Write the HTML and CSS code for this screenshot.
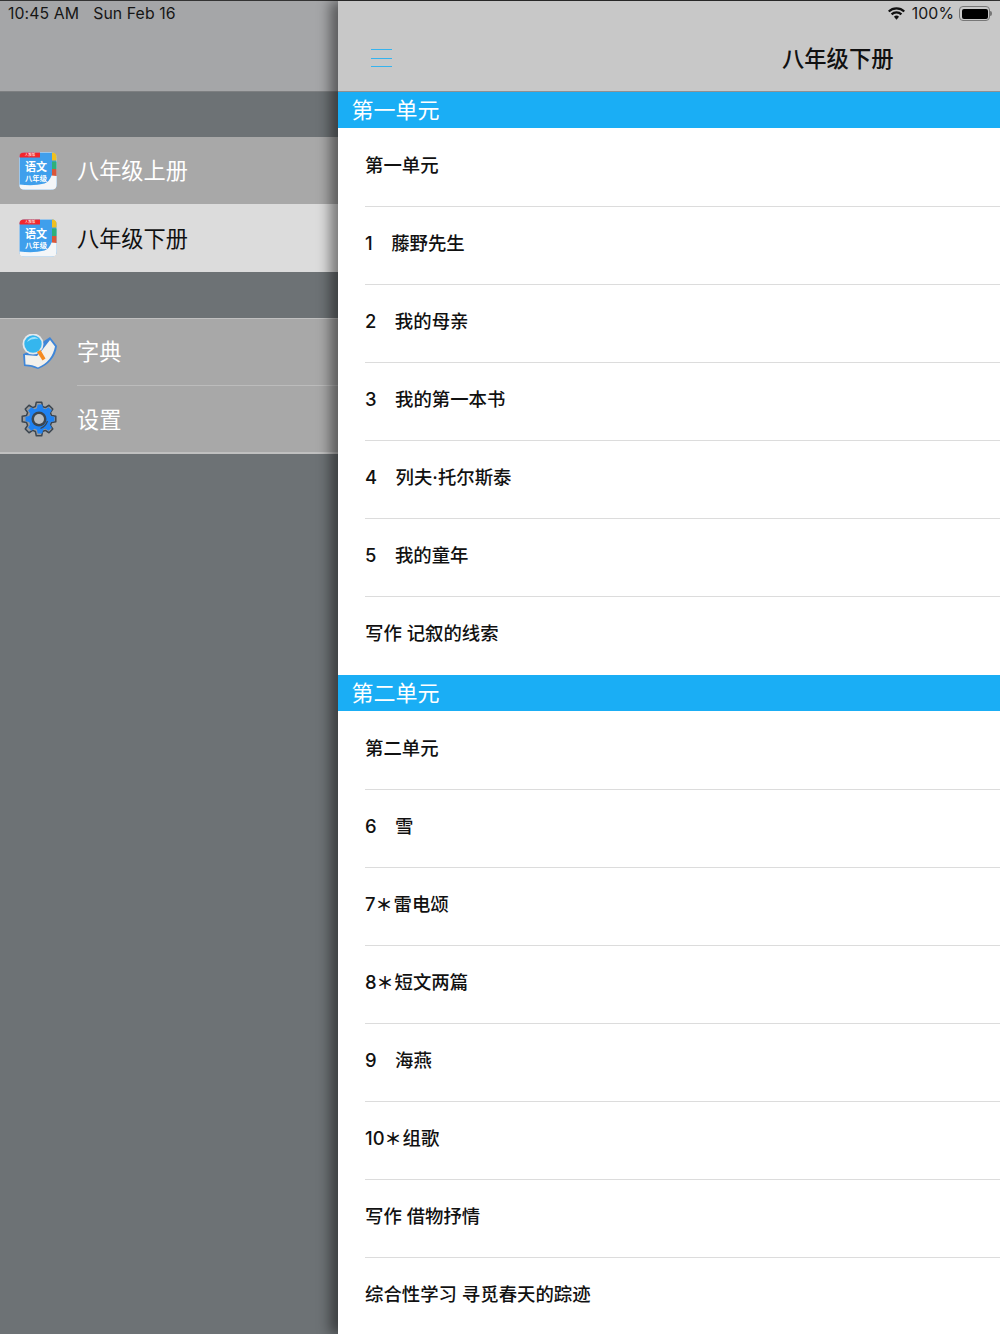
FILE: index.html
```html
<!DOCTYPE html>
<html lang="zh-CN">
<head>
<meta charset="utf-8">
<title>八年级下册</title>
<link rel="stylesheet" href="styles.css">
</head>
<body>
<div class="app">
  <aside class="side">
    <header class="side-head">
      <span class="status-text">10:45 AM</span>
      <span class="status-text">Sun Feb 16</span>
    </header>
    <nav class="group group-books">
      <a class="item first">
        <svg class="icon" viewBox="0 0 38 38">
          <rect x="0.500" y="0.500" width="37" height="37" rx="5" fill="#3f9fec" stroke="#9cc6ea"/>
          <path d="M5 0.500h16v5H1q-0.500 0-0.500-1 0-4 4.500-4z" fill="#f2262c"/>
          <path d="M33 0.500q4.500 0 4.500 4.500v3.500H33z" fill="#f0c020"/>
          <rect x="33" y="9.500" width="4.500" height="7.500" fill="#2eb07a"/>
          <rect x="33" y="17" width="4.500" height="7" fill="#d9573a"/>
          <path d="M0.500 32.500q14 2 25-1 5-2 7-8l5 0.500v9q0 4.500-4.500 4.500H5q-4.500 0-4.500-4.500z" fill="#f4f6f8"/>
          <text class="ico-tab" x="11" y="4.300">人教版</text>
          <text class="ico-big" x="17" y="19">语文</text>
          <text class="ico-small" x="17" y="28.500">八年级</text>
        </svg>
        <span class="label">八年级上册</span>
      </a>
      <a class="item active">
        <svg class="icon" viewBox="0 0 38 38">
          <rect x="0.500" y="0.500" width="37" height="37" rx="5" fill="#3f9fec" stroke="#9cc6ea"/>
          <path d="M5 0.500h16v5H1q-0.500 0-0.500-1 0-4 4.500-4z" fill="#f2262c"/>
          <path d="M33 0.500q4.500 0 4.500 4.500v3.500H33z" fill="#f0c020"/>
          <rect x="33" y="9.500" width="4.500" height="7.500" fill="#2eb07a"/>
          <rect x="33" y="17" width="4.500" height="7" fill="#d9573a"/>
          <path d="M0.500 32.500q14 2 25-1 5-2 7-8l5 0.500v9q0 4.500-4.500 4.500H5q-4.500 0-4.500-4.500z" fill="#f4f6f8"/>
          <text class="ico-tab" x="11" y="4.300">人教版</text>
          <text class="ico-big" x="17" y="19">语文</text>
          <text class="ico-small" x="17" y="28.500">八年级</text>
        </svg>
        <span class="label">八年级下册</span>
      </a>
    </nav>
    <nav class="group group-tools">
      <a class="item tool">
        <svg class="icon tool-icon" viewBox="0 0 36 36">
          <path d="M2 20 3 32q7 0 14 3 8-3 13-9 5-6 6-14l-7-9-6 4-7 8z" fill="#3f86d8"/>
          <path d="M4 21 4.500 30.500q7 0 12.500 3 7-3 11.500-8.500 4-5 5.500-12.500L29 6l-7 9-6 7z" fill="#f3f1ec"/>
          <circle cx="12" cy="10" r="10.500" fill="#e4e8ec"/>
          <circle cx="12" cy="10" r="8.700" fill="#35b6ee"/>
          <path d="M6 8q2-5 8-5 3 1 3 2-6-1-11 3z" fill="#9fe0f8"/>
          <path d="M16 18 19.500 16l5 8.500-3 2z" fill="#f58a1f"/>
        </svg>
        <span class="label">字典</span>
      </a>
      <a class="item tool">
        <svg class="icon tool-icon" viewBox="0 0 36 36">
          <polygon class="gear-out" points="15.300,1.200 20.700,1.200 21.600,5.500 24.300,6.600 28,4.250 31.750,8 29.400,11.700 30.500,14.400 34.800,15.300 34.800,20.700 30.500,21.600 29.400,24.300 31.750,28 28,31.750 24.300,29.400 21.600,30.500 20.700,34.800 15.300,34.800 14.400,30.500 11.700,29.400 8,31.750 4.250,28 6.600,24.300 5.500,21.600 1.200,20.700 1.200,15.300 5.500,14.400 6.600,11.700 4.250,8 8,4.250 11.700,6.600 14.400,5.500"/>
          <polygon class="gear-in" points="15.300,1.200 20.700,1.200 21.600,5.500 24.300,6.600 28,4.250 31.750,8 29.400,11.700 30.500,14.400 34.800,15.300 34.800,20.700 30.500,21.600 29.400,24.300 31.750,28 28,31.750 24.300,29.400 21.600,30.500 20.700,34.800 15.300,34.800 14.400,30.500 11.700,29.400 8,31.750 4.250,28 6.600,24.300 5.500,21.600 1.200,20.700 1.200,15.300 5.500,14.400 6.600,11.700 4.250,8 8,4.250 11.700,6.600 14.400,5.500" transform="translate(3.500 2.500) scale(0.86)"/>
          <circle cx="18" cy="18" r="7.500" fill="#3c4650"/>
          <circle cx="18" cy="18" r="5" fill="#b8bcc0"/>
          <path d="M26.500 20q-1.500 5-7 7.500" fill="none" stroke="#3c4650" stroke-width="1.200"/>
        </svg>
        <span class="label">设置</span>
      </a>
    </nav>
  </aside>

  <main class="main">
    <header class="main-head">
      <div class="status-right">
        <svg class="wifi" viewBox="0 0 18 13"><path d="M9 13 6.300 10a3.800 3.800 0 0 1 5.400 0zM4.600 8.300 3 6.600a8.500 8.500 0 0 1 12 0l-1.600 1.700a6.200 6.200 0 0 0-8.800 0zM1.600 5.200 0 3.500a12.800 12.800 0 0 1 18 0l-1.600 1.700a10.500 10.500 0 0 0-14.800 0z" fill="#111"/></svg>
        <span class="status-text">100%</span>
        <span class="battery"><span class="battery-fill"></span></span>
      </div>
      <div class="nav-row">
        <button class="menu" aria-label="菜单"><i></i><i></i><i></i></button>
        <h1 class="title">八年级下册</h1>
      </div>
    </header>

    <section>
      <h2 class="sec">第一单元</h2>
      <ul class="list">
        <li>第一单元</li>
        <li><span class="num">1</span>藤野先生</li>
        <li><span class="num">2</span>我的母亲</li>
        <li><span class="num">3</span>我的第一本书</li>
        <li><span class="num">4</span>列夫·托尔斯泰</li>
        <li><span class="num">5</span>我的童年</li>
        <li>写作 记叙的线索</li>
      </ul>
    </section>
    <section>
      <h2 class="sec">第二单元</h2>
      <ul class="list">
        <li>第二单元</li>
        <li><span class="num">6</span>雪</li>
        <li>7<span class="star">＊</span>雷电颂</li>
        <li>8<span class="star">＊</span>短文两篇</li>
        <li><span class="num">9</span>海燕</li>
        <li>10<span class="star">＊</span>组歌</li>
        <li>写作 借物抒情</li>
        <li>综合性学习 寻觅春天的踪迹</li>
      </ul>
    </section>
  </main>
</div>
</body>
</html>
```
FILE: styles.css
```css
* { box-sizing: border-box; }
html, body { margin: 0; padding: 0; }
body {
  width: 1000px;
  height: 1334px;
  overflow: hidden;
  font-family: Inter, "Noto Sans CJK SC", sans-serif;
  color: #111;
}
.app { display: flex; height: 1334px; border-top: 1px solid #333; }

.side { width: 338px; flex: none; background: #6d7275; }
.side-head {
  height: 91px;
  background: #a5a6a8;
  border-bottom: 1px solid #7d7f81;
  padding: 4px 0 0 8px;
  display: flex;
  align-items: flex-start;
  gap: 14px;
}
.status-text { font-size: 15.800px; line-height: 18px; color: #161616; letter-spacing: 0.1px; }

.group { display: flex; flex-direction: column; }
.group-books { margin-top: 45px; }
.group-tools {
  margin-top: 46px;
  background: #a8a8a8;
  border-top: 1px solid #c0c0c0;
  border-bottom: 2px solid #c0c0c0;
}
.item {
  height: 68px;
  display: flex;
  align-items: center;
  background: #a8a8a8;
  color: #fff;
  font-size: 22.200px;
  padding-left: 19px;
  gap: 20px;
}
.item.first { height: 67px; }
.item.active { background: #dcdcdc; color: #111; }
.item.active .label { margin-bottom: 2px; }
.label { margin-bottom: 4px; }
.tool { position: relative; height: 66px; gap: 19px; }
.tool + .tool { height: 67px; }
.tool + .tool::before {
  content: "";
  position: absolute;
  left: 77px;
  right: 0;
  top: 0;
  height: 1px;
  background: #bcbcbc;
}
.tool + .tool .label { margin-bottom: 2px; }
.icon { width: 38px; height: 38px; flex: none; }
.tool-icon { width: 36px; height: 36px; margin: 0 1px 0 2px; }
.ico-tab { font-size: 3.500px; fill: #fff; text-anchor: middle; font-family: "Noto Sans CJK SC", sans-serif; }
.ico-big { font-size: 11px; font-weight: 700; fill: #fff; text-anchor: middle; font-family: "Noto Sans CJK SC", sans-serif; }
.ico-small { font-size: 7.300px; font-weight: 700; fill: #fff; text-anchor: middle; font-family: "Noto Sans CJK SC", sans-serif; }
.gear-out { fill: #98999b; stroke: #3c4650; stroke-width: 1.500px; stroke-linejoin: round; }
.gear-in { fill: #1f82f2; }

.main {
  flex: 1;
  min-width: 0;
  height: 1333px;
  overflow: hidden;
  background: #fff;
  position: relative;
  box-shadow: -8px 0 12px rgba(0, 0, 0, 0.45);
}
.main-head {
  height: 91px;
  background: #c8c8c8;
  border-bottom: 1px solid #8e9092;
  display: flex;
  flex-direction: column;
}
.status-right {
  height: 26px;
  padding: 4px 9px 0 0;
  display: flex;
  justify-content: flex-end;
  align-items: flex-start;
  gap: 5px;
}
.wifi { width: 17px; height: 13px; margin: 2px 2px 0 0; }
.battery {
  width: 31px;
  height: 15px;
  margin: 1px 1px 0 0;
  border: 1px solid #777;
  border-radius: 4px;
  padding: 1.500px;
  display: block;
  position: relative;
}
.battery::after {
  content: "";
  position: absolute;
  right: -3px;
  top: 4px;
  width: 2px;
  height: 5px;
  background: #777;
  border-radius: 0 2px 2px 0;
}
.battery-fill { display: block; height: 100%; background: #000; border-radius: 2px; }
.nav-row { position: relative; flex: 1; display: flex; align-items: flex-start; padding-left: 33px; }
.menu {
  width: 21px;
  height: 18px;
  margin-top: 22px;
  padding: 0;
  border: 0;
  background: none;
  display: flex;
  flex-direction: column;
  justify-content: space-between;
}
.menu i { display: block; height: 1px; background: #36b3ee; }
.title {
  margin: 16px 0 0 390px;
  font-size: 22.300px;
  line-height: 32px;
  font-weight: 500;
  color: #111;
}
.sec {
  margin: 0;
  height: 36px;
  background: #1aaef5;
  color: #fff;
  font-size: 22px;
  font-weight: 400;
  line-height: 36px;
  padding-left: 13.500px;
}
.list { list-style: none; margin: 0; padding: 1px 0 0 27px; }
.list li {
  height: 78px;
  padding-top: 23px;
  font-size: 18.400px;
  line-height: 26px;
  font-weight: 500;
  white-space: pre;
  color: #111;
  border-bottom: 1px solid #dcdcdc;
}
.list li:last-child { border-bottom: 0; }
.num { margin-right: 18.500px; }
.star { font-size: 17px; font-weight: 700; margin-right: 1px; }
```
